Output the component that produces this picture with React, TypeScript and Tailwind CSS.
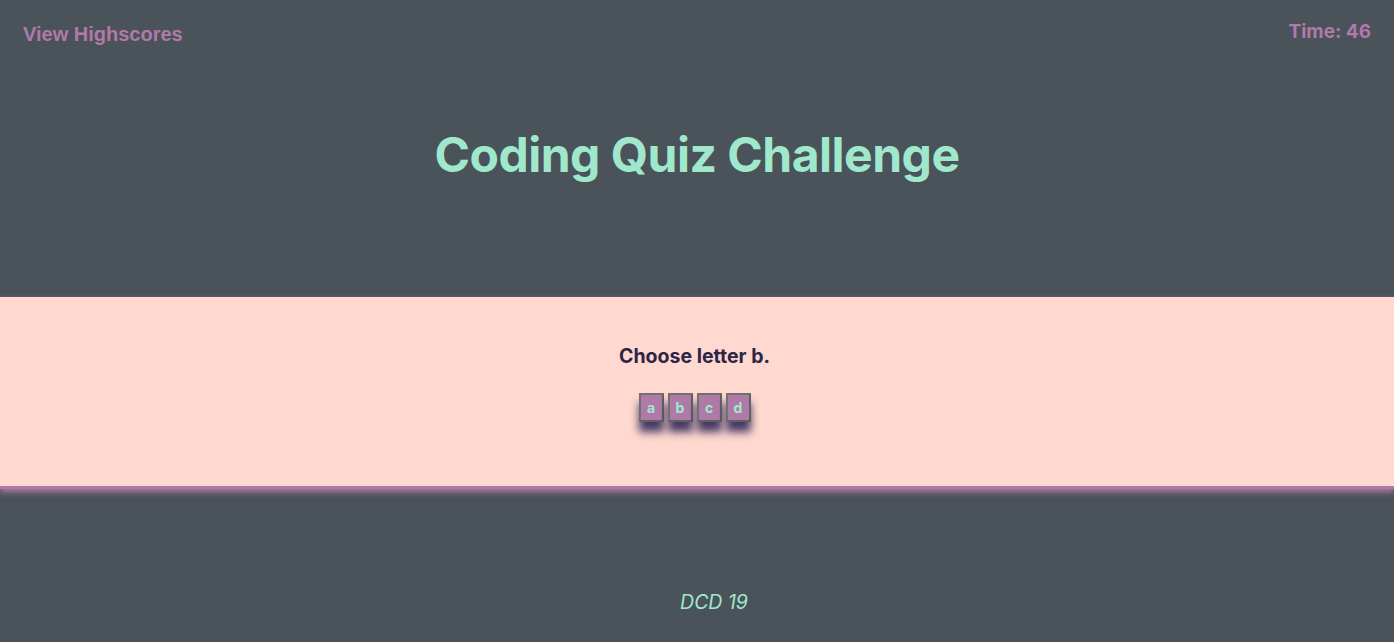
import React from 'react';

const Choice: React.FC<{ letter: string }> = ({ letter }) => (
  <button className="w-[25px] h-[29px] bg-[#b07aa8] text-[#a0e8cc] text-[14px] font-bold border-2 border-[#5f6262] border-t-[#707272] border-l-[#707272] shadow-[0_10px_9px_rgba(35,30,80,0.85)] flex items-center justify-center">
    {letter}
  </button>
);

export default function App() {
  return (
    <div className="min-h-[642px] bg-[#4a525a] font-['Inter',sans-serif] flex flex-col">
      <header className="h-[297px] flex flex-col">
        <div className="flex justify-between items-start px-[23px] pt-[19px]">
          <a className="text-[#b07aa8] font-bold text-[20px] font-['Liberation_Sans',sans-serif]">View Highscores</a>
          <span className="text-[#b07aa8] font-bold text-[19px] -mt-[1px]">Time: 46</span>
        </div>
        <h1 className="text-center text-[#a0e8cc] font-bold text-[48px] tracking-[-0.5px] mt-[70px]">
          Coding Quiz Challenge
        </h1>
      </header>
      <main className="h-[192px] bg-[#ffd8d0] flex flex-col items-center pt-[45px] shadow-[0_3px_6px_#b07aa8] border-b-[3px] border-[#b07aa8]">
        <p className="text-[#2d2545] font-bold text-[19.5px] -ml-[5px]">Choose letter b.</p>
        <div className="flex gap-[4px] mt-[22px] -ml-[5px]">
          {['a', 'b', 'c', 'd'].map(l => <Choice key={l} letter={l} />)}
        </div>
      </main>
      <footer className="flex justify-center pt-[99px] pl-[34px]">
        <p className="text-[#a0e8cc] italic text-[19.5px]">DCD 19</p>
      </footer>
    </div>
  );
}
